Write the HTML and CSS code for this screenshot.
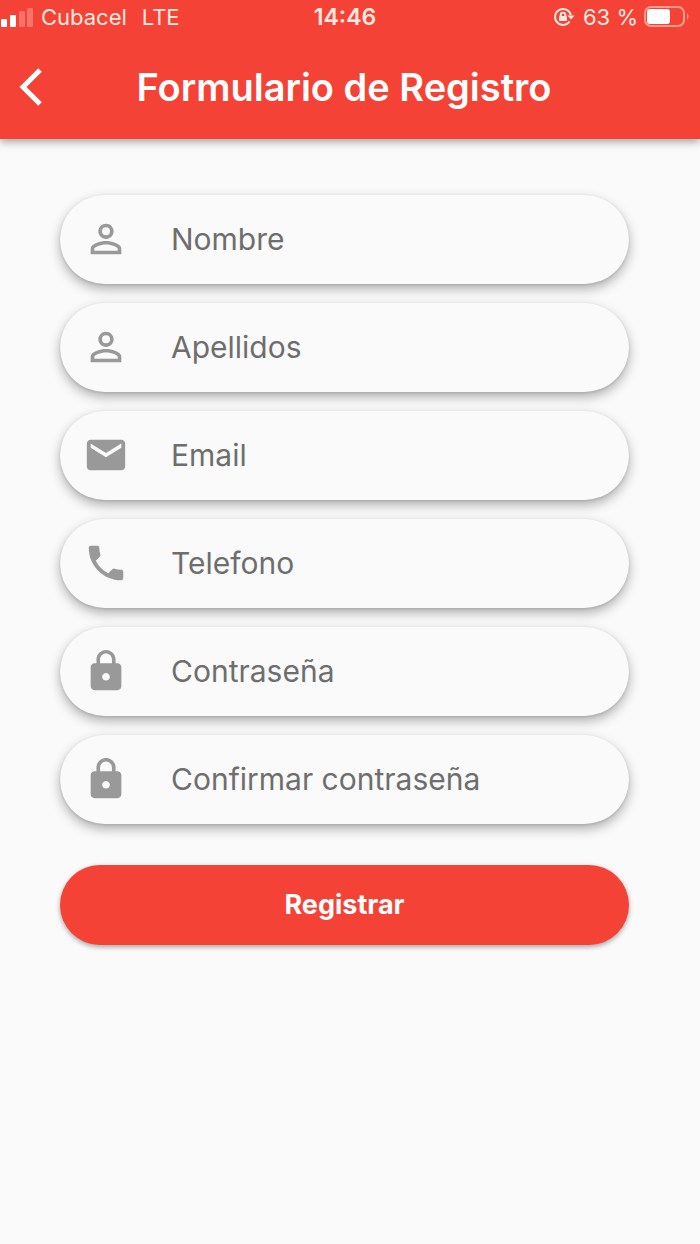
FILE: index.html
```html
<!DOCTYPE html>
<html lang="es">
<head>
<meta charset="utf-8">
<meta name="viewport" content="width=device-width, initial-scale=1">
<title>Formulario de Registro</title>
<link rel="stylesheet" href="styles.css">
</head>
<body>
<svg class="sprite" aria-hidden="true">
  <symbol id="person" viewBox="0 0 24 24"><path d="M12 5.900a2.100 2.100 0 1 1 0 4.200 2.100 2.100 0 0 1 0-4.200m0 9c2.970 0 6.100 1.460 6.100 2.100v1.100H5.900V17c0-.64 3.130-2.100 6.100-2.100M12 4C9.790 4 8 5.790 8 8s1.790 4 4 4 4-1.790 4-4-1.790-4-4-4zm0 9c-2.670 0-8 1.340-8 4v3h16v-3c0-2.660-5.330-4-8-4z"/></symbol>
  <symbol id="email" viewBox="0 0 24 24"><path d="M20 4H4c-1.100 0-1.990.9-1.990 2L2 18c0 1.100.9 2 2 2h16c1.100 0 2-.9 2-2V6c0-1.100-.9-2-2-2zm0 4.200l-8 5-8-5V6l8 5 8-5v2.200z"/></symbol>
  <symbol id="phone" viewBox="0 0 24 24"><path d="M6.620 10.790c1.440 2.830 3.760 5.140 6.590 6.590l2.200-2.200c.27-.27.67-.36 1.020-.24 1.120.37 2.330.57 3.570.57.55 0 1 .45 1 1V20c0 .55-.45 1-1 1-9.390 0-17-7.610-17-17 0-.55.45-1 1-1h3.500c.55 0 1 .45 1 1 0 1.250.2 2.450.57 3.570.11.35.03.74-.25 1.020l-2.200 2.200z"/></symbol>
  <symbol id="lock" viewBox="0 0 24 24"><path d="M18 8h-1V6c0-2.760-2.240-5-5-5S7 3.240 7 6v2H6c-1.100 0-2 .9-2 2v10c0 1.100.9 2 2 2h12c1.100 0 2-.9 2-2V10c0-1.100-.9-2-2-2zm-6 9c-1.100 0-2-.9-2-2s.9-2 2-2 2 .9 2 2-.9 2-2 2zm3.100-9H8.900V6c0-1.710 1.390-3.100 3.100-3.100s3.100 1.390 3.100 3.100v2z"/></symbol>
</svg>

<header class="header">
  <div class="status">
    <div class="status-left">
      <svg class="signal" viewBox="0 0 34 22" aria-hidden="true">
        <rect x="1" y="13" width="6" height="8" rx="1"/>
        <rect x="10" y="9" width="6" height="12" rx="1"/>
        <rect class="faint" x="19" y="5" width="6" height="16" rx="1"/>
        <rect class="faint" x="27" y="2" width="6" height="19" rx="1"/>
      </svg>
      <span>Cubacel</span>
      <span class="network">LTE</span>
    </div>
    <time class="clock">14:46</time>
    <div class="status-right">
      <svg class="rotation" viewBox="0 0 22 22" aria-hidden="true">
        <path class="ring" d="M16.600 15.500A8 8 0 1 1 17.800 9"/>
        <path d="M14.500 9.500h7L18 13.500z"/>
        <rect x="6" y="10" width="8" height="5" rx="1"/>
        <path class="shackle" d="M7.700 10.500V9a2.300 2.300 0 0 1 4.600 0v1.500"/>
      </svg>
      <span>63 %</span>
      <svg class="battery" viewBox="0 0 46 22" aria-hidden="true">
        <rect class="shell" x="1" y="1" width="39" height="19" rx="6"/>
        <rect x="3" y="3" width="23" height="15" rx="3"/>
        <path class="shell-tip" d="M43 7q3 3.500 0 7z"/>
      </svg>
    </div>
  </div>
  <div class="appbar">
    <button class="back" type="button" aria-label="Atrás">
      <svg viewBox="0 0 24 38" aria-hidden="true"><path d="M21 2L4 19l17 17"/></svg>
    </button>
    <h1 class="title">Formulario de Registro</h1>
  </div>
</header>

<main class="main">
  <form class="form">
    <label class="field"><svg class="icon" aria-hidden="true"><use href="#person"/></svg><input class="input" type="text" placeholder="Nombre" aria-label="Nombre"></label>
    <label class="field"><svg class="icon" aria-hidden="true"><use href="#person"/></svg><input class="input" type="text" placeholder="Apellidos" aria-label="Apellidos"></label>
    <label class="field"><svg class="icon" aria-hidden="true"><use href="#email"/></svg><input class="input" type="email" placeholder="Email" aria-label="Email"></label>
    <label class="field"><svg class="icon" aria-hidden="true"><use href="#phone"/></svg><input class="input" type="tel" placeholder="Telefono" aria-label="Telefono"></label>
    <label class="field"><svg class="icon" aria-hidden="true"><use href="#lock"/></svg><input class="input" type="password" placeholder="Contraseña" aria-label="Contraseña"></label>
    <label class="field"><svg class="icon" aria-hidden="true"><use href="#lock"/></svg><input class="input" type="password" placeholder="Confirmar contraseña" aria-label="Confirmar contraseña"></label>
    <button class="submit" type="submit">Registrar</button>
  </form>
</main>
</body>
</html>
```
FILE: styles.css
```css
* { box-sizing: border-box; }

body {
  margin: 0;
  min-height: 100vh;
  background: #fafafa;
  font-family: Inter, "Liberation Sans", sans-serif;
}

.sprite {
  position: absolute;
  width: 0;
  height: 0;
}

.header {
  background: #f44336;
  color: #fff;
  box-shadow: 0 3px 8px rgba(0, 0, 0, 0.35);
}

.status {
  display: grid;
  grid-template-columns: 1fr auto 1fr;
  align-items: center;
  height: 34px;
  padding-right: 10px;
  font-size: 22px;
  line-height: 34px;
  color: #ffe9e0;
}

.status-left,
.status-right {
  display: flex;
  align-items: center;
}

.status-left { gap: 7px; }

.status-right { justify-content: flex-end; }

.network { margin-left: 8px; }

.clock {
  font-size: 23px;
  font-weight: 600;
}

.signal {
  width: 34px;
  height: 22px;
  fill: #fff;
}

.faint { opacity: 0.25; }

.rotation {
  width: 22px;
  height: 22px;
  margin-right: 8px;
  fill: #ffe9e0;
}

.ring,
.shackle {
  fill: none;
  stroke: #ffe9e0;
  stroke-width: 2;
}

.battery {
  width: 46px;
  height: 22px;
  margin-left: 6px;
  fill: #fff;
}

.shell {
  fill: none;
  stroke: #ff9c8c;
  stroke-width: 2;
}

.shell-tip { fill: #ff9c8c; }

.appbar {
  display: grid;
  grid-template-columns: 62px 1fr 74px;
  align-items: center;
  height: 105px;
}

.back {
  display: flex;
  justify-content: center;
  padding: 0;
  border: 0;
  background: none;
}

.back svg {
  width: 24px;
  height: 38px;
  fill: none;
  stroke: #fff;
  stroke-width: 5;
}

.title {
  margin: 0;
  font-size: 38px;
  font-weight: 600;
  line-height: 48px;
  text-align: center;
}

.main { padding: 56px 71px 56px 60px; }

.form {
  display: flex;
  flex-direction: column;
  gap: 19px;
}

.field {
  display: flex;
  align-items: center;
  gap: 42px;
  height: 89px;
  padding: 0 23px 1px;
  border-radius: 45px;
  background: #fafafa;
  box-shadow: 0 5px 12px rgba(0, 0, 0, 0.3), 0 1px 3px rgba(0, 0, 0, 0.12);
}

.icon {
  flex: none;
  width: 46px;
  height: 46px;
  fill: #999;
}

.input {
  flex: 1;
  min-width: 0;
  padding: 0;
  border: 0;
  outline: 0;
  background: none;
  color: #333;
  font-family: inherit;
  font-size: 30px;
  line-height: 40px;
}

.input::placeholder {
  color: #6e6e6e;
  opacity: 1;
}

.submit {
  height: 80px;
  margin-top: 22px;
  padding: 0 0 2px;
  border: 0;
  border-radius: 40px;
  background: #f44336;
  color: #fff;
  font-family: inherit;
  font-size: 27px;
  font-weight: 700;
  box-shadow: 0 2px 5px rgba(0, 0, 0, 0.35);
}
```
